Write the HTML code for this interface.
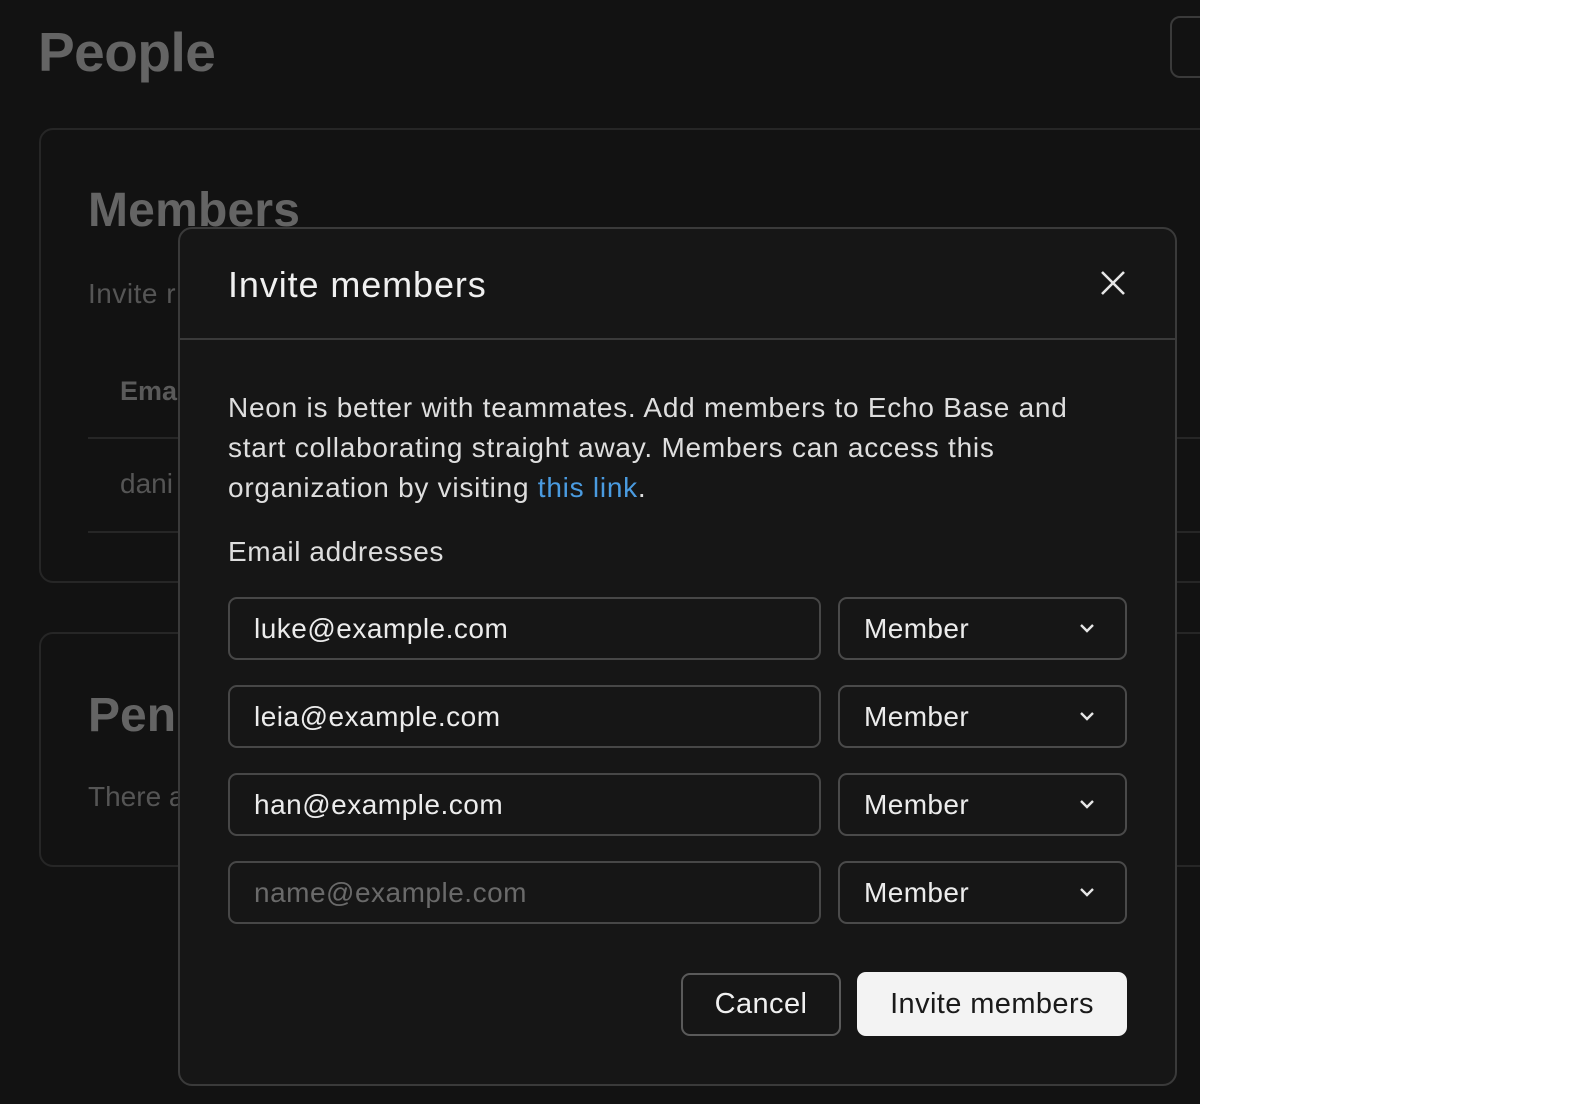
<!DOCTYPE html>
<html><head><meta charset="utf-8"><style>
*{box-sizing:border-box;margin:0;padding:0}
body{width:1592px;height:1104px;background:#fff;font-family:"Liberation Sans",sans-serif;position:relative;overflow:hidden}
.page{position:absolute;left:0;top:0;width:1200px;height:1104px;background:#121212;overflow:hidden}
.a{position:absolute;white-space:nowrap}
.modal{position:absolute;left:178px;top:227px;width:999px;height:859px;background:#161616;border:2px solid #3a3a3a;border-radius:14px}
.inp{position:absolute;left:228px;width:593px;height:63px;border:2px solid #474747;border-radius:9px;font-size:28px;color:#ececec;padding-left:24px;line-height:59px;letter-spacing:0.5px}
.sel{position:absolute;left:838px;width:289px;height:63px;border:2px solid #4a4a4a;border-radius:9px;font-size:28px;color:#ececec;padding-left:24px;line-height:59px;letter-spacing:0.4px}
.sel svg{position:absolute;right:30px;top:23px}
</style></head><body>
<div class="page">
 <div class="a" style="left:38px;top:20px;font-size:55px;font-weight:bold;color:#646464;letter-spacing:-0.5px">People</div>
 <div class="a" style="left:1170px;top:16px;width:60px;height:62px;border:2px solid #3a3a3a;border-radius:10px"></div>
 <div class="a" style="left:39px;top:128px;width:1200px;height:455px;border:2px solid #262626;border-radius:14px"></div>
 <div class="a" style="left:88px;top:183px;font-size:48px;font-weight:bold;color:#646464;letter-spacing:0.2px">Members</div>
 <div class="a" style="left:88px;top:278px;font-size:28px;color:#555;letter-spacing:0.5px">Invite r</div>
 <div class="a" style="left:120px;top:376px;font-size:27px;font-weight:bold;color:#5a5a5a">Ema</div>
 <div class="a" style="left:88px;top:437px;width:1120px;height:2px;background:#262626"></div>
 <div class="a" style="left:120px;top:468px;font-size:28px;color:#555">dani</div>
 <div class="a" style="left:88px;top:531px;width:1120px;height:2px;background:#262626"></div>
 <div class="a" style="left:39px;top:632px;width:1200px;height:235px;border:2px solid #262626;border-radius:14px"></div>
 <div class="a" style="left:88px;top:688px;font-size:48px;font-weight:bold;color:#646464">Pend</div>
 <div class="a" style="left:88px;top:781px;font-size:28px;color:#555">There a</div>
</div>
<div class="modal"></div>
<div class="a" style="left:228px;top:264px;font-size:36px;color:#f0f0f0;letter-spacing:0.9px">Invite members</div>
<svg class="a" style="left:1100px;top:270px" width="26" height="26" viewBox="0 0 26 26"><path d="M2 2L24 24M24 2L2 24" stroke="#e6e6e6" stroke-width="2.6" fill="none"/></svg>
<div class="a" style="left:179px;top:338px;width:997px;height:2px;background:#3a3a3a"></div>
<div class="a" style="left:228px;top:388px;font-size:28px;line-height:40px;color:#dedede;letter-spacing:0.75px">Neon is better with teammates. Add members to Echo Base and<br>start collaborating straight away. Members can access this<br>organization by visiting <span style="color:#4a9be0">this link</span>.</div>
<div class="a" style="left:228px;top:536px;font-size:28px;color:#dedede;letter-spacing:0.6px">Email addresses</div>

<div class="inp" style="top:597px">luke@example.com</div>
<div class="sel" style="top:597px">Member<svg width="16" height="12" viewBox="0 0 16 12"><path d="M2 3L8 9L14 3" stroke="#e6e6e6" stroke-width="2.4" fill="none"/></svg></div>
<div class="inp" style="top:685px">leia@example.com</div>
<div class="sel" style="top:685px">Member<svg width="16" height="12" viewBox="0 0 16 12"><path d="M2 3L8 9L14 3" stroke="#e6e6e6" stroke-width="2.4" fill="none"/></svg></div>
<div class="inp" style="top:773px">han@example.com</div>
<div class="sel" style="top:773px">Member<svg width="16" height="12" viewBox="0 0 16 12"><path d="M2 3L8 9L14 3" stroke="#e6e6e6" stroke-width="2.4" fill="none"/></svg></div>
<div class="inp" style="top:861px;color:#6a6a6a">name@example.com</div>
<div class="sel" style="top:861px">Member<svg width="16" height="12" viewBox="0 0 16 12"><path d="M2 3L8 9L14 3" stroke="#e6e6e6" stroke-width="2.4" fill="none"/></svg></div>

<div class="a" style="left:681px;top:973px;width:160px;height:63px;border:2px solid #5a5a5a;border-radius:9px;font-size:29px;color:#f0f0f0;text-align:center;line-height:59px;letter-spacing:0.4px">Cancel</div>
<div class="a" style="left:857px;top:972px;width:270px;height:64px;background:#f3f3f3;border-radius:9px;font-size:29px;color:#1a1a1a;text-align:center;line-height:64px;letter-spacing:0.4px">Invite members</div>
</body></html>
